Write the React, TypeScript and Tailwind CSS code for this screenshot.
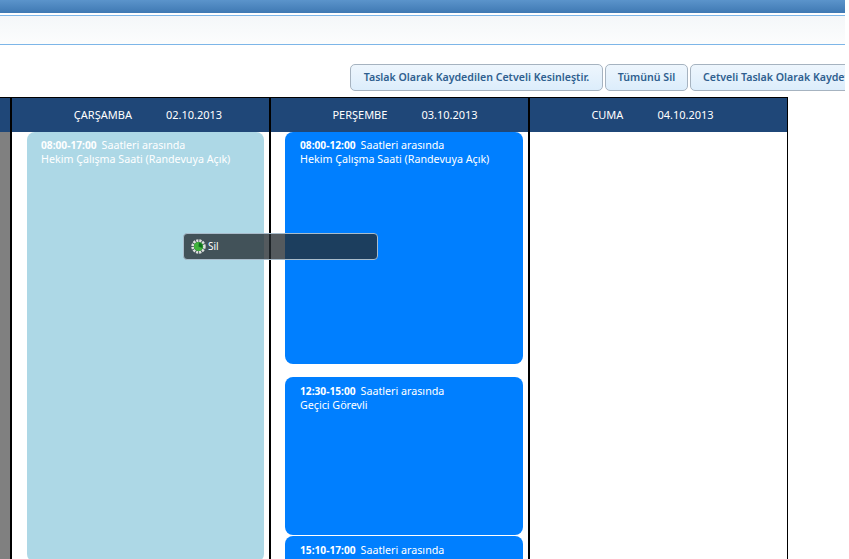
import React from 'react'

type Slot = { time: string; label?: string; h: string; mb: string; pt: string }

const font = "font-['Noto_Sans',sans-serif]"

const Card = ({ slot, light }: { slot: Slot; light?: boolean }) => (
	<div className={`${slot.h} ${slot.mb} ${slot.pt} shrink-0 rounded-[8px] text-[10.7px] leading-[14px] text-white ${light ? 'bg-[#add8e6] pl-[14px]' : 'bg-[#007fff] pl-[15px]'}`}>
		<div className="flex">
			<b className="font-bold text-[10.2px] mr-[5px]">{slot.time}</b>
			<span>Saatleri arasında</span>
		</div>
		{slot.label && <div>{slot.label}</div>}
	</div>
)

const Header = ({ day, date, shift }: { day: string; date: string; shift: string }) => (
	<div className={`h-[34px] bg-[#1f4778] flex items-center justify-center text-[11px] text-white ${shift}`}>
		<span className="mr-[34px]">{day}</span>
		<span>{date}</span>
	</div>
)

const App = () => {
	return (
		<div className={`${font} relative w-[845px] h-[559px] overflow-hidden bg-white`}>
			<div className="h-[13px] bg-gradient-to-b from-[#5b94cb] to-[#3f79b3]"></div>
			<div className="h-[30px] mt-[2px] border-y border-[#7db6e8] bg-gradient-to-b from-[#f4f7f9] to-[#fcfdfd]"></div>

			<div className="h-[52px] pt-[19px] pl-[350px] flex gap-[2px] whitespace-nowrap">
				<button className="shrink-0 h-[27px] w-[253px] pt-[1px] rounded-[5px] border border-[#a6b3c0] bg-gradient-to-b from-[#eef6fd] to-[#dcedfb] text-[10.6px] font-semibold text-[#2f5f8f]">Taslak Olarak Kaydedilen Cetveli Kesinleştir.</button>
				<button className="shrink-0 h-[27px] w-[83px] pt-[1px] rounded-[5px] border border-[#a6b3c0] bg-gradient-to-b from-[#eef6fd] to-[#dcedfb] text-[10.6px] font-semibold text-[#2f5f8f]">Tümünü Sil</button>
				<button className="shrink-0 h-[27px] w-[253px] pt-[1px] rounded-[5px] border border-[#a6b3c0] bg-gradient-to-b from-[#eef6fd] to-[#dcedfb] text-[10.6px] font-semibold text-[#2f5f8f] text-left pl-[12px]">Cetveli Taslak Olarak Kaydet</button>
			</div>

			<div className="flex w-[788px] h-[462px] border-t border-r border-black overflow-hidden">
				<div className="w-[10px] shrink-0">
					<div className="h-[34px] bg-[#1f4778]"></div>
					<div className="h-full bg-[#808080]"></div>
				</div>

				<div className="w-[259px] shrink-0 border-l-2 border-black">
					<Header day="ÇARŞAMBA" date="02.10.2013" shift="pl-[15px]" />
					<div className="pl-[15px] pr-[5px]">
						<Card light slot={{ time: '08:00-17:00', label: 'Hekim Çalışma Saati (Randevuya Açık)', h: 'h-[430px]', mb: '', pt: 'pt-[6px]' }} />
					</div>
				</div>

				<div className="w-[259px] shrink-0 border-l-2 border-black">
					<Header day="PERŞEMBE" date="03.10.2013" shift="pl-[11px]" />
					<div className="flex flex-col pl-[14px] pr-[5px]">
						<Card slot={{ time: '08:00-12:00', label: 'Hekim Çalışma Saati (Randevuya Açık)', h: 'h-[232px]', mb: 'mb-[13px]', pt: 'pt-[6px]' }} />
						<Card slot={{ time: '12:30-15:00', label: 'Geçici Görevli', h: 'h-[158px]', mb: 'mb-[1px]', pt: 'pt-[7px]' }} />
						<Card slot={{ time: '15:10-17:00', h: 'h-[60px]', mb: '', pt: 'pt-[7px]' }} />
					</div>
				</div>

				<div className="flex-1 border-l-2 border-black">
					<Header day="CUMA" date="04.10.2013" shift="pr-[12px]" />
				</div>
			</div>

			{/* hover popup */}
			<div className="absolute left-[183px] top-[233px] w-[195px] h-[27px] rounded-[4px] border border-[#a9bccb] bg-[#242c31c7] flex items-center pl-[7px] text-[10px] text-white">
				<svg width="15" height="15" viewBox="0 0 15 15" className="mr-[2px]">
					<circle cx="7.5" cy="7.5" r="5.9" fill="none" stroke="#dfe2df" strokeWidth="2.6" strokeDasharray="2.2 0.9" />
					<circle cx="7.5" cy="7.5" r="4.6" fill="#3fb23a" />
					<path d="M7.5 7.5 L8 3.4 A4.2 4.2 0 0 1 11.3 9 Z" fill="#0e6e1e" />
				</svg>
				Sil
			</div>
		</div>
	)
}

export default App
